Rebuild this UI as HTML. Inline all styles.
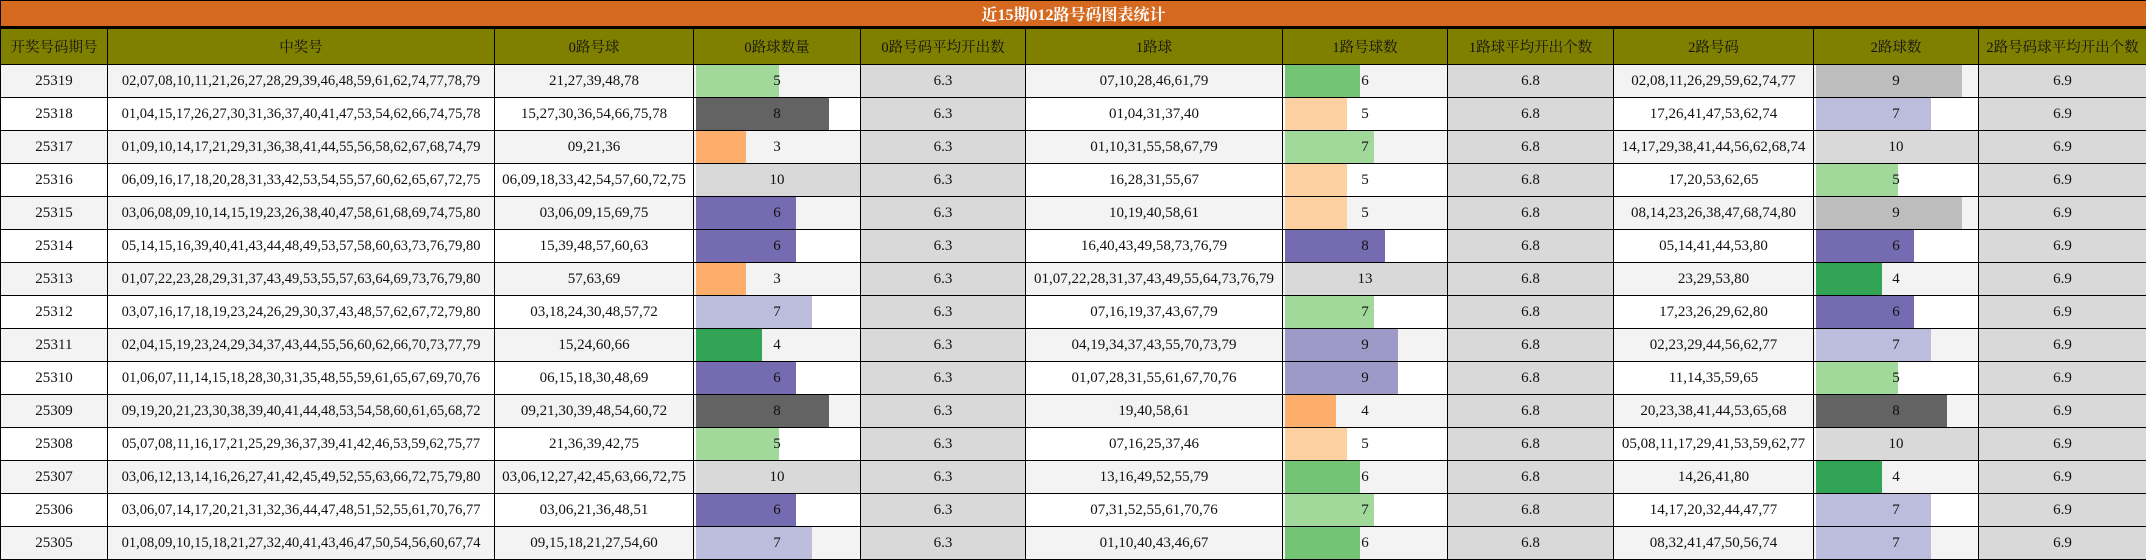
<!DOCTYPE html>
<html><head><meta charset="utf-8"><style>
body{margin:0;width:2146px;height:560px;overflow:hidden;background:#fff;font-family:"Liberation Serif","Noto Serif CJK SC","Noto Sans CJK SC",serif;}
table{border-collapse:collapse;table-layout:fixed;width:2146px;}
td,th{border:1.5px solid #000;padding:0;text-align:center;font-size:15px;color:#111;white-space:nowrap;overflow:hidden;position:relative;font-weight:normal}
.title td{height:25px;background:#d56920;color:#fff;font-weight:bold;font-size:16px;border-bottom:3px solid #000}
.hd th{height:35px;background:#808000;color:#111;font-size:14.5px}
tbody tr td{height:32px}
tr.a td{background:#f3f3f3}
tr.b td{background:#fff}
tr td.av{background:#d9d9d9}
.n{display:inline-block;font-size:14.5px}
.bar{position:absolute;left:2px;top:0;bottom:0}
.v{position:relative}
</style></head><body>
<table>
<colgroup><col style="width:107px"><col style="width:387px"><col style="width:199px"><col style="width:167px"><col style="width:165px"><col style="width:257px"><col style="width:165px"><col style="width:166px"><col style="width:200px"><col style="width:165px"><col style="width:168px"></colgroup>
<tr class="title"><td colspan="11">近15期012路号码图表统计</td></tr>
<tr class="hd"><th>开奖号码期号</th><th>中奖号</th><th>0路号球</th><th>0路球数量</th><th>0路号码平均开出数</th><th>1路球</th><th>1路号球数</th><th>1路球平均开出个数</th><th>2路号码</th><th>2路球数</th><th>2路号码球平均开出个数</th></tr>
<tr class="a"><td>25319</td><td><span class="n">02,07,08,10,11,21,26,27,28,29,39,46,48,59,61,62,74,77,78,79</span></td><td>21,27,39,48,78</td><td><div class="bar" style="width:50%;background:#a1d99b"></div><span class="v">5</span></td><td class="av">6.3</td><td>07,10,28,46,61,79</td><td><div class="bar" style="width:46%;background:#74c476"></div><span class="v">6</span></td><td class="av">6.8</td><td>02,08,11,26,29,59,62,74,77</td><td><div class="bar" style="width:89%;background:#bdbdbd"></div><span class="v">9</span></td><td class="av">6.9</td></tr>
<tr class="b"><td>25318</td><td><span class="n">01,04,15,17,26,27,30,31,36,37,40,41,47,53,54,62,66,74,75,78</span></td><td>15,27,30,36,54,66,75,78</td><td><div class="bar" style="width:80%;background:#636363"></div><span class="v">8</span></td><td class="av">6.3</td><td>01,04,31,37,40</td><td><div class="bar" style="width:38%;background:#fdd0a2"></div><span class="v">5</span></td><td class="av">6.8</td><td>17,26,41,47,53,62,74</td><td><div class="bar" style="width:70%;background:#bcbddc"></div><span class="v">7</span></td><td class="av">6.9</td></tr>
<tr class="a"><td>25317</td><td><span class="n">01,09,10,14,17,21,29,31,36,38,41,44,55,56,58,62,67,68,74,79</span></td><td>09,21,36</td><td><div class="bar" style="width:30%;background:#fdae6b"></div><span class="v">3</span></td><td class="av">6.3</td><td>01,10,31,55,58,67,79</td><td><div class="bar" style="width:54%;background:#a1d99b"></div><span class="v">7</span></td><td class="av">6.8</td><td>14,17,29,38,41,44,56,62,68,74</td><td><div class="bar" style="width:99%;background:#d9d9d9"></div><span class="v">10</span></td><td class="av">6.9</td></tr>
<tr class="b"><td>25316</td><td><span class="n">06,09,16,17,18,20,28,31,33,42,53,54,55,57,60,62,65,67,72,75</span></td><td>06,09,18,33,42,54,57,60,72,75</td><td><div class="bar" style="width:99%;background:#d9d9d9"></div><span class="v">10</span></td><td class="av">6.3</td><td>16,28,31,55,67</td><td><div class="bar" style="width:38%;background:#fdd0a2"></div><span class="v">5</span></td><td class="av">6.8</td><td>17,20,53,62,65</td><td><div class="bar" style="width:50%;background:#a1d99b"></div><span class="v">5</span></td><td class="av">6.9</td></tr>
<tr class="a"><td>25315</td><td><span class="n">03,06,08,09,10,14,15,19,23,26,38,40,47,58,61,68,69,74,75,80</span></td><td>03,06,09,15,69,75</td><td><div class="bar" style="width:60%;background:#756bb1"></div><span class="v">6</span></td><td class="av">6.3</td><td>10,19,40,58,61</td><td><div class="bar" style="width:38%;background:#fdd0a2"></div><span class="v">5</span></td><td class="av">6.8</td><td>08,14,23,26,38,47,68,74,80</td><td><div class="bar" style="width:89%;background:#bdbdbd"></div><span class="v">9</span></td><td class="av">6.9</td></tr>
<tr class="b"><td>25314</td><td><span class="n">05,14,15,16,39,40,41,43,44,48,49,53,57,58,60,63,73,76,79,80</span></td><td>15,39,48,57,60,63</td><td><div class="bar" style="width:60%;background:#756bb1"></div><span class="v">6</span></td><td class="av">6.3</td><td>16,40,43,49,58,73,76,79</td><td><div class="bar" style="width:61%;background:#756bb1"></div><span class="v">8</span></td><td class="av">6.8</td><td>05,14,41,44,53,80</td><td><div class="bar" style="width:60%;background:#756bb1"></div><span class="v">6</span></td><td class="av">6.9</td></tr>
<tr class="a"><td>25313</td><td><span class="n">01,07,22,23,28,29,31,37,43,49,53,55,57,63,64,69,73,76,79,80</span></td><td>57,63,69</td><td><div class="bar" style="width:30%;background:#fdae6b"></div><span class="v">3</span></td><td class="av">6.3</td><td>01,07,22,28,31,37,43,49,55,64,73,76,79</td><td><div class="bar" style="width:99%;background:#d9d9d9"></div><span class="v">13</span></td><td class="av">6.8</td><td>23,29,53,80</td><td><div class="bar" style="width:40%;background:#31a354"></div><span class="v">4</span></td><td class="av">6.9</td></tr>
<tr class="b"><td>25312</td><td><span class="n">03,07,16,17,18,19,23,24,26,29,30,37,43,48,57,62,67,72,79,80</span></td><td>03,18,24,30,48,57,72</td><td><div class="bar" style="width:70%;background:#bcbddc"></div><span class="v">7</span></td><td class="av">6.3</td><td>07,16,19,37,43,67,79</td><td><div class="bar" style="width:54%;background:#a1d99b"></div><span class="v">7</span></td><td class="av">6.8</td><td>17,23,26,29,62,80</td><td><div class="bar" style="width:60%;background:#756bb1"></div><span class="v">6</span></td><td class="av">6.9</td></tr>
<tr class="a"><td>25311</td><td><span class="n">02,04,15,19,23,24,29,34,37,43,44,55,56,60,62,66,70,73,77,79</span></td><td>15,24,60,66</td><td><div class="bar" style="width:40%;background:#31a354"></div><span class="v">4</span></td><td class="av">6.3</td><td>04,19,34,37,43,55,70,73,79</td><td><div class="bar" style="width:69%;background:#9e9ac8"></div><span class="v">9</span></td><td class="av">6.8</td><td>02,23,29,44,56,62,77</td><td><div class="bar" style="width:70%;background:#bcbddc"></div><span class="v">7</span></td><td class="av">6.9</td></tr>
<tr class="b"><td>25310</td><td><span class="n">01,06,07,11,14,15,18,28,30,31,35,48,55,59,61,65,67,69,70,76</span></td><td>06,15,18,30,48,69</td><td><div class="bar" style="width:60%;background:#756bb1"></div><span class="v">6</span></td><td class="av">6.3</td><td>01,07,28,31,55,61,67,70,76</td><td><div class="bar" style="width:69%;background:#9e9ac8"></div><span class="v">9</span></td><td class="av">6.8</td><td>11,14,35,59,65</td><td><div class="bar" style="width:50%;background:#a1d99b"></div><span class="v">5</span></td><td class="av">6.9</td></tr>
<tr class="a"><td>25309</td><td><span class="n">09,19,20,21,23,30,38,39,40,41,44,48,53,54,58,60,61,65,68,72</span></td><td>09,21,30,39,48,54,60,72</td><td><div class="bar" style="width:80%;background:#636363"></div><span class="v">8</span></td><td class="av">6.3</td><td>19,40,58,61</td><td><div class="bar" style="width:31%;background:#fdae6b"></div><span class="v">4</span></td><td class="av">6.8</td><td>20,23,38,41,44,53,65,68</td><td><div class="bar" style="width:80%;background:#636363"></div><span class="v">8</span></td><td class="av">6.9</td></tr>
<tr class="b"><td>25308</td><td><span class="n">05,07,08,11,16,17,21,25,29,36,37,39,41,42,46,53,59,62,75,77</span></td><td>21,36,39,42,75</td><td><div class="bar" style="width:50%;background:#a1d99b"></div><span class="v">5</span></td><td class="av">6.3</td><td>07,16,25,37,46</td><td><div class="bar" style="width:38%;background:#fdd0a2"></div><span class="v">5</span></td><td class="av">6.8</td><td>05,08,11,17,29,41,53,59,62,77</td><td><div class="bar" style="width:99%;background:#d9d9d9"></div><span class="v">10</span></td><td class="av">6.9</td></tr>
<tr class="a"><td>25307</td><td><span class="n">03,06,12,13,14,16,26,27,41,42,45,49,52,55,63,66,72,75,79,80</span></td><td>03,06,12,27,42,45,63,66,72,75</td><td><div class="bar" style="width:99%;background:#d9d9d9"></div><span class="v">10</span></td><td class="av">6.3</td><td>13,16,49,52,55,79</td><td><div class="bar" style="width:46%;background:#74c476"></div><span class="v">6</span></td><td class="av">6.8</td><td>14,26,41,80</td><td><div class="bar" style="width:40%;background:#31a354"></div><span class="v">4</span></td><td class="av">6.9</td></tr>
<tr class="b"><td>25306</td><td><span class="n">03,06,07,14,17,20,21,31,32,36,44,47,48,51,52,55,61,70,76,77</span></td><td>03,06,21,36,48,51</td><td><div class="bar" style="width:60%;background:#756bb1"></div><span class="v">6</span></td><td class="av">6.3</td><td>07,31,52,55,61,70,76</td><td><div class="bar" style="width:54%;background:#a1d99b"></div><span class="v">7</span></td><td class="av">6.8</td><td>14,17,20,32,44,47,77</td><td><div class="bar" style="width:70%;background:#bcbddc"></div><span class="v">7</span></td><td class="av">6.9</td></tr>
<tr class="a"><td>25305</td><td><span class="n">01,08,09,10,15,18,21,27,32,40,41,43,46,47,50,54,56,60,67,74</span></td><td>09,15,18,21,27,54,60</td><td><div class="bar" style="width:70%;background:#bcbddc"></div><span class="v">7</span></td><td class="av">6.3</td><td>01,10,40,43,46,67</td><td><div class="bar" style="width:46%;background:#74c476"></div><span class="v">6</span></td><td class="av">6.8</td><td>08,32,41,47,50,56,74</td><td><div class="bar" style="width:70%;background:#bcbddc"></div><span class="v">7</span></td><td class="av">6.9</td></tr>
</table>
</body></html>
